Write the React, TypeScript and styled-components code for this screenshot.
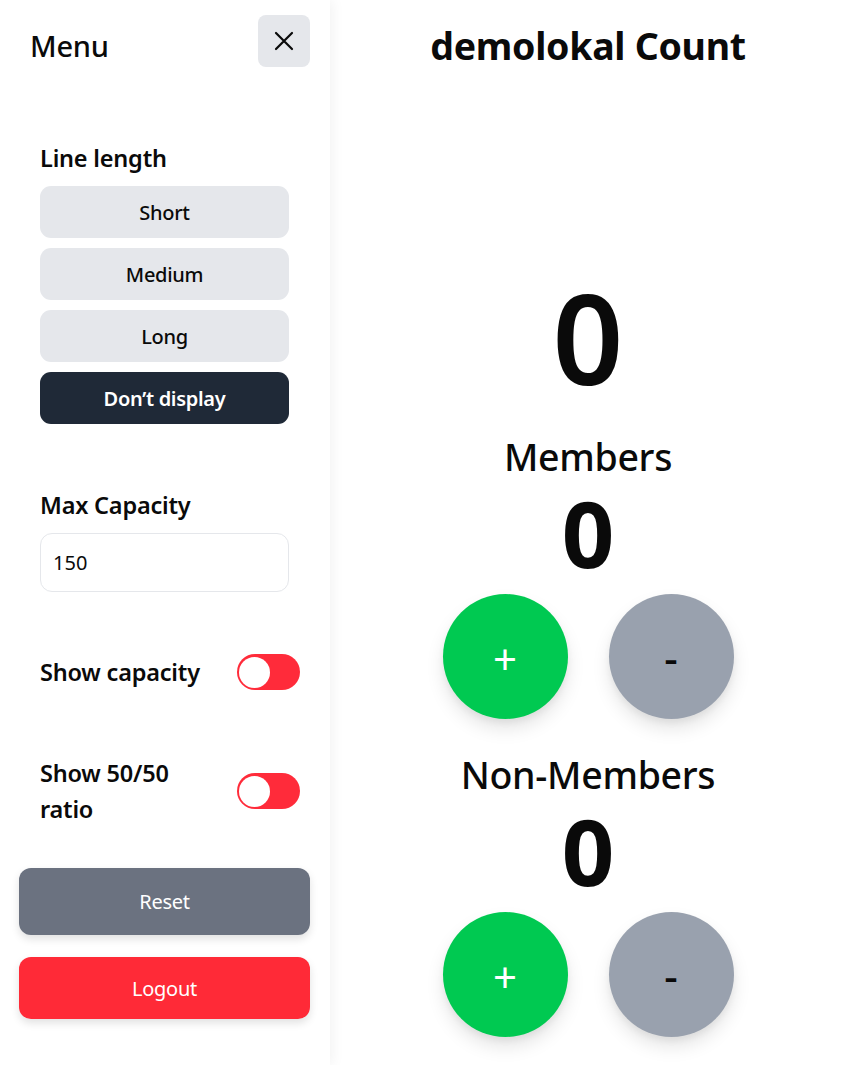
import React, { useState } from "react";
import styled, { createGlobalStyle } from "styled-components";

const GlobalStyle = createGlobalStyle`
  html, body { margin: 0; padding: 0; background: #ffffff; }
  body { font-family: "Noto Sans", "Open Sans", sans-serif; color: #0a0a0a; }
  * { box-sizing: border-box; }
`;

const Page = styled.div`
  display: flex;
  width: 100%;
  height: 1065px;
  overflow: hidden;
`;

const Sidebar = styled.aside`
  width: 330px;
  flex: 0 0 330px;
  padding: 15px 20px 0 19px;
  display: flex;
  flex-direction: column;
  background: #fff;
  box-shadow: 3px 0 12px rgba(0, 0, 0, 0.05);
  position: relative;
  z-index: 1;
`;

const Header = styled.div`
  display: flex;
  align-items: center;
  justify-content: space-between;
  height: 52px;
  padding-left: 11px;
`;

const MenuTitle = styled.h2`
  margin: 0;
  font-size: 29px;
  font-weight: 500;
  letter-spacing: -0.2px;
  padding-top: 9px;
`;

const CloseButton = styled.button`
  width: 52px;
  height: 52px;
  border: none;
  border-radius: 8px;
  background: #e5e7eb;
  display: flex;
  align-items: center;
  justify-content: center;
  padding: 0;
  cursor: pointer;
`;

const Section = styled.div<{ $top: number }>`
  margin-top: ${(p) => p.$top}px;
  padding: 0 21px 0 21px;
  display: flex;
  flex-direction: column;
`;

const Label = styled.div`
  font-size: 23.5px;
  font-weight: 600;
  line-height: 36px;
  letter-spacing: -0.2px;
`;

const OptionList = styled.div`
  margin-top: 10px;
  display: flex;
  flex-direction: column;
  gap: 10px;
`;

const OptionButton = styled.button<{ $active?: boolean }>`
  height: 52px;
  border: none;
  border-radius: 11px;
  background: ${(p) => (p.$active ? "#1f2937" : "#e5e7eb")};
  color: ${(p) => (p.$active ? "#ffffff" : "#0a0a0a")};
  font-family: inherit;
  font-size: 20px;
  font-weight: ${(p) => (p.$active ? 600 : 500)};
  letter-spacing: -0.3px;
  cursor: pointer;
`;

const NumberInput = styled.input`
  margin-top: 10px;
  height: 59px;
  border: 1px solid #e5e7eb;
  border-radius: 12px;
  padding: 0 12px;
  font-family: inherit;
  font-size: 20px;
  color: #0a0a0a;
  outline: none;
`;

const ToggleRow = styled.div<{ $top: number }>`
  margin-top: ${(p) => p.$top}px;
  padding: 0 10px 0 21px;
  display: flex;
  align-items: center;
  justify-content: space-between;
  gap: 20px;
`;

const ToggleLabel = styled(Label)`
  flex: 1;
  max-width: 176px;
`;

const Toggle = styled.button<{ $on: boolean }>`
  width: 63px;
  height: 36px;
  flex: 0 0 63px;
  border: none;
  border-radius: 18px;
  background: #ff2b3a;
  position: relative;
  padding: 0;
  cursor: pointer;
`;

const Knob = styled.span<{ $on: boolean }>`
  position: absolute;
  top: 3px;
  left: ${(p) => (p.$on ? "29px" : "2px")};
  width: 31px;
  height: 31px;
  border-radius: 50%;
  background: #fff;
`;

const ActionButton = styled.button<{ $variant: "reset" | "logout"; $top: number; $h: number }>`
  margin-top: ${(p) => p.$top}px;
  height: ${(p) => p.$h}px;
  width: 100%;
  border: none;
  border-radius: 12px;
  background: ${(p) => (p.$variant === "reset" ? "#6b7280" : "#ff2a37")};
  color: #fff;
  font-family: inherit;
  font-size: 20px;
  font-weight: 400;
  letter-spacing: -0.3px;
  box-shadow: 0 4px 8px rgba(0, 0, 0, 0.12);
  cursor: pointer;
`;

const Main = styled.main`
  flex: 1;
  display: flex;
  flex-direction: column;
  align-items: center;
  padding-top: 22px;
`;

const Title = styled.h1`
  margin: 0;
  font-size: 37.5px;
  line-height: 48px;
  font-weight: 700;
  letter-spacing: -0.3px;
`;

const TotalCount = styled.div`
  margin-top: 203px;
  font-size: 124px;
  line-height: 128px;
  font-weight: 600;
`;

const Group = styled.section`
  margin-top: 32px;
  display: flex;
  flex-direction: column;
  align-items: center;
`;

const GroupTitle = styled.h2`
  margin: 0;
  font-size: 37.5px;
  line-height: 48px;
  font-weight: 500;
  letter-spacing: -0.3px;
`;

const GroupCount = styled.div`
  margin-top: 4px;
  font-size: 92px;
  line-height: 96px;
  font-weight: 700;
`;

const ButtonRow = styled.div`
  margin-top: 13px;
  display: flex;
  gap: 41px;
`;

const CircleButton = styled.button<{ $kind: "plus" | "minus" }>`
  width: 125px;
  height: 125px;
  border-radius: 50%;
  border: none;
  background: ${(p) => (p.$kind === "plus" ? "#00c951" : "#99a1ae")};
  color: ${(p) => (p.$kind === "plus" ? "#ffffff" : "#0a0a0a")};
  font-family: inherit;
  font-size: 42px;
  font-weight: ${(p) => (p.$kind === "plus" ? 400 : 500)};
  line-height: 1;
  box-shadow: 0 10px 18px rgba(0, 0, 0, 0.1), 0 4px 6px rgba(0, 0, 0, 0.05);
  cursor: pointer;
  display: flex;
  align-items: center;
  justify-content: center;
  padding: ${(p) => (p.$kind === "plus" ? "4px 0 0 0" : "0")};
`;

const CloseIcon = () => (
  <svg width="20" height="20" viewBox="0 0 20 20" fill="none">
    <path d="M2 2L18 18M18 2L2 18" stroke="#0a0a0a" strokeWidth="2.2" strokeLinecap="round" />
  </svg>
);

export default function App() {
  const [length, setLength] = useState("Don’t display");
  const [cap, setCap] = useState("150");
  const [showCap, setShowCap] = useState(false);
  const [showRatio, setShowRatio] = useState(false);
  const [members, setMembers] = useState(0);
  const [non, setNon] = useState(0);

  return (
    <>
      <GlobalStyle />
      <Page>
        <Sidebar>
          <Header>
            <MenuTitle>Menu</MenuTitle>
            <CloseButton aria-label="Close">
              <CloseIcon />
            </CloseButton>
          </Header>

          <Section $top={73}>
            <Label>Line length</Label>
            <OptionList>
              {["Short", "Medium", "Long", "Don’t display"].map((o) => (
                <OptionButton key={o} $active={length === o} onClick={() => setLength(o)}>
                  {o}
                </OptionButton>
              ))}
            </OptionList>
          </Section>

          <Section $top={63}>
            <Label>Max Capacity</Label>
            <NumberInput value={cap} onChange={(e) => setCap(e.target.value)} />
          </Section>

          <ToggleRow $top={62}>
            <ToggleLabel>Show capacity</ToggleLabel>
            <Toggle $on={showCap} onClick={() => setShowCap(!showCap)}>
              <Knob $on={showCap} />
            </Toggle>
          </ToggleRow>

          <ToggleRow $top={65}>
            <ToggleLabel>Show 50/50 ratio</ToggleLabel>
            <Toggle $on={showRatio} onClick={() => setShowRatio(!showRatio)}>
              <Knob $on={showRatio} />
            </Toggle>
          </ToggleRow>

          <ActionButton $variant="reset" $top={41} $h={67} onClick={() => { setMembers(0); setNon(0); }}>
            Reset
          </ActionButton>
          <ActionButton $variant="logout" $top={22} $h={62}>
            Logout
          </ActionButton>
        </Sidebar>

        <Main>
          <Title>demolokal Count</Title>
          <TotalCount>{members + non}</TotalCount>

          <Group>
            <GroupTitle>Members</GroupTitle>
            <GroupCount>{members}</GroupCount>
            <ButtonRow>
              <CircleButton $kind="plus" onClick={() => setMembers(members + 1)}>+</CircleButton>
              <CircleButton $kind="minus" onClick={() => setMembers(Math.max(0, members - 1))}>-</CircleButton>
            </ButtonRow>
          </Group>

          <Group>
            <GroupTitle>Non-Members</GroupTitle>
            <GroupCount>{non}</GroupCount>
            <ButtonRow>
              <CircleButton $kind="plus" onClick={() => setNon(non + 1)}>+</CircleButton>
              <CircleButton $kind="minus" onClick={() => setNon(Math.max(0, non - 1))}>-</CircleButton>
            </ButtonRow>
          </Group>
        </Main>
      </Page>
    </>
  );
}
